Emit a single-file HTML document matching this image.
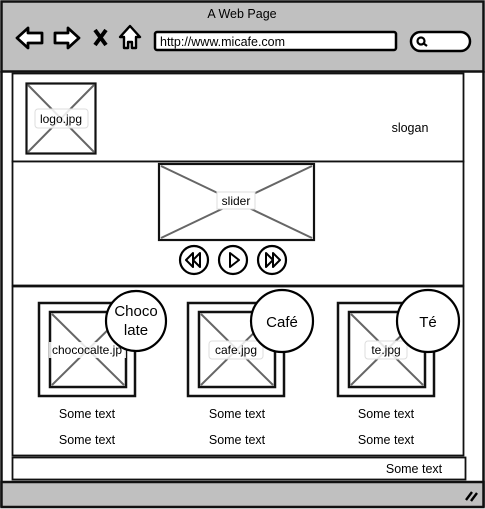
<!DOCTYPE html>
<html><head><meta charset="utf-8"><style>
html,body{margin:0;padding:0;background:#fff;}
svg{display:block;}
text{font-family:"Liberation Sans",sans-serif;fill:#000;}
</style></head><body>
<svg width="485" height="509" viewBox="0 0 485 509" xmlns="http://www.w3.org/2000/svg">
<rect x="0" y="0" width="485" height="509" fill="#fff"/>
<rect x="1.5" y="1.5" width="482" height="70" fill="#c0c0c0" stroke="#111" stroke-width="2.5"/>
<text x="242" y="18" font-size="12.5" text-anchor="middle">A Web Page</text>
<path d="M17 38 L28 28 L28 33 L42 33 L42 43 L28 43 L28 48 Z" fill="#fff" stroke="#000" stroke-width="2.8" stroke-linejoin="round"/>
<path d="M79 38 L68 28 L68 33 L55 33 L55 43 L68 43 L68 48 Z" fill="#fff" stroke="#000" stroke-width="2.8" stroke-linejoin="round"/>
<path d="M95 30 L106 45 M106 30 L95 45" stroke="#000" stroke-width="4"/>
<path d="M130 26 L140 37 L136 37 L136 48 L132 48 L132 42 L128 42 L128 48 L124 48 L124 37 L120 37 Z" fill="#fff" stroke="#000" stroke-width="2.4" stroke-linejoin="round"/>
<rect x="155" y="32" width="241" height="18" rx="2" fill="#fff" stroke="#000" stroke-width="2.5"/>
<text x="160" y="46" font-size="12.5">http://www.micafe.com</text>
<rect x="411" y="32" width="59" height="19" rx="9.5" fill="#fff" stroke="#000" stroke-width="2.5"/>
<circle cx="421" cy="41" r="3.5" fill="none" stroke="#000" stroke-width="2.2"/>
<path d="M423 43 L427 46" stroke="#000" stroke-width="2.2"/>
<path d="M1.5 71 L1.5 507 M483.5 71 L483.5 507" stroke="#111" stroke-width="2.5"/>
<rect x="12.5" y="73.5" width="451" height="88" fill="#fff" stroke="#111" stroke-width="1.8"/>
<rect x="26.5" y="83.5" width="69" height="70" fill="#fff" stroke="#111" stroke-width="2.2"/>
<path d="M28 85 L94 152 M94 85 L28 152" stroke="#666" stroke-width="2"/>
<rect x="35" y="109" width="53" height="19" rx="3" fill="#fff" fill-opacity="0.85" stroke="#ddd"/>
<text x="61" y="123" font-size="12" text-anchor="middle">logo.jpg</text>
<text x="410" y="132" font-size="12.5" text-anchor="middle">slogan</text>
<rect x="12.5" y="161.5" width="451" height="124" fill="#fff" stroke="#111" stroke-width="1.8"/>
<rect x="159" y="164" width="155" height="76" fill="#fff" stroke="#111" stroke-width="2.2"/>
<path d="M161 166 L312 238 M312 166 L161 238" stroke="#666" stroke-width="2"/>
<rect x="217" y="192" width="38" height="17" fill="#fff" stroke="#ddd"/>
<text x="236" y="205" font-size="12" text-anchor="middle">slider</text>
<circle cx="194" cy="260" r="14" fill="#fff" stroke="#000" stroke-width="2.2"/>
<path d="M193 253 L186 260 L193 267 Z M200 253 L193 260 L200 267 Z" fill="none" stroke="#000" stroke-width="2" stroke-linejoin="round"/>
<circle cx="233" cy="260" r="14" fill="#fff" stroke="#000" stroke-width="2.2"/>
<path d="M230 253 L239 260 L230 267 Z" fill="none" stroke="#000" stroke-width="2" stroke-linejoin="round"/>
<circle cx="272" cy="260" r="14" fill="#fff" stroke="#000" stroke-width="2.2"/>
<path d="M266 253 L273 260 L266 267 Z M273 253 L280 260 L273 267 Z" fill="none" stroke="#000" stroke-width="2" stroke-linejoin="round"/>
<rect x="12.5" y="286.5" width="451" height="169" fill="#fff" stroke="#111" stroke-width="1.8"/>
<g>
<rect x="39" y="303" width="96" height="93" fill="#fff" stroke="#111" stroke-width="2.5"/>
<rect x="50" y="312" width="76" height="75" fill="#fff" stroke="#111" stroke-width="2.5"/>
<path d="M52 314 L124 385 M124 314 L52 385" stroke="#666" stroke-width="2"/>
<rect x="49" y="342" width="77" height="16" fill="#fff" fill-opacity="0.85"/>
<text x="87" y="354" font-size="12" text-anchor="middle">chococalte.jp</text>
<circle cx="136" cy="321" r="30" fill="#fff" stroke="#000" stroke-width="2.2"/>
<text x="136" y="316" font-size="15" text-anchor="middle">Choco</text>
<text x="136" y="335" font-size="15" text-anchor="middle">late</text>
</g>
<g>
<rect x="188" y="303" width="96" height="93" fill="#fff" stroke="#111" stroke-width="2.5"/>
<rect x="199" y="312" width="76" height="75" fill="#fff" stroke="#111" stroke-width="2.5"/>
<path d="M201 314 L273 385 M273 314 L201 385" stroke="#666" stroke-width="2"/>
<rect x="209" y="341" width="54" height="18" rx="3" fill="#fff" fill-opacity="0.85" stroke="#ddd"/>
<text x="236" y="354" font-size="12" text-anchor="middle">cafe.jpg</text>
<circle cx="282" cy="321" r="31" fill="#fff" stroke="#000" stroke-width="2.2"/>
<text x="282" y="327" font-size="15" text-anchor="middle">Café</text>
</g>
<g>
<rect x="338" y="303" width="96" height="93" fill="#fff" stroke="#111" stroke-width="2.5"/>
<rect x="349" y="312" width="76" height="75" fill="#fff" stroke="#111" stroke-width="2.5"/>
<path d="M351 314 L423 385 M423 314 L351 385" stroke="#666" stroke-width="2"/>
<rect x="365" y="341" width="42" height="18" rx="3" fill="#fff" fill-opacity="0.85" stroke="#ddd"/>
<text x="386" y="354" font-size="12" text-anchor="middle">te.jpg</text>
<circle cx="428" cy="321" r="31" fill="#fff" stroke="#000" stroke-width="2.2"/>
<text x="428" y="327" font-size="15" text-anchor="middle">Té</text>
</g>
<g font-size="12.5">
<text x="87" y="418" text-anchor="middle">Some text</text>
<text x="87" y="444" text-anchor="middle">Some text</text>
<text x="237" y="418" text-anchor="middle">Some text</text>
<text x="237" y="444" text-anchor="middle">Some text</text>
<text x="386" y="418" text-anchor="middle">Some text</text>
<text x="386" y="444" text-anchor="middle">Some text</text>
</g>
<rect x="12.5" y="457.5" width="453" height="22" fill="#fff" stroke="#111" stroke-width="1.8"/>
<text x="414" y="473" font-size="12.5" text-anchor="middle">Some text</text>
<rect x="1.5" y="482" width="482" height="25" fill="#c0c0c0" stroke="#111" stroke-width="2.5"/>
<path d="M466 500 L472 492 M471 501 L477 493" stroke="#000" stroke-width="2.4"/>
</svg>
</body></html>
